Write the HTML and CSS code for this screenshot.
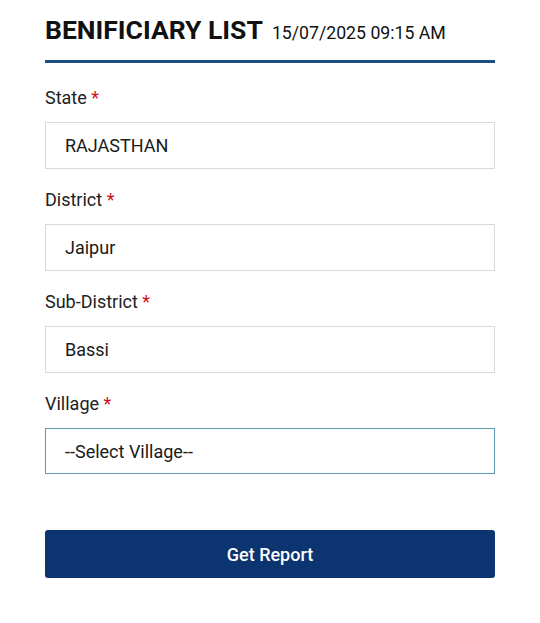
FILE: index.html
```html
<!DOCTYPE html>
<html>
<head>
<meta charset="utf-8">
<link rel="stylesheet" href="styles.css">
</head>
<body>
<div class="page">
  <div class="header">
    <h1 class="title">BENIFICIARY LIST</h1>
    <span class="date">15/07/2025 09:15 AM</span>
  </div>
  <form class="form">
    <div class="field">
      <label class="label">State <span class="req">*</span></label>
      <div class="input">RAJASTHAN</div>
    </div>
    <div class="field">
      <label class="label">District <span class="req">*</span></label>
      <div class="input">Jaipur</div>
    </div>
    <div class="field">
      <label class="label">Sub-District <span class="req">*</span></label>
      <div class="input">Bassi</div>
    </div>
    <div class="field">
      <label class="label">Village <span class="req">*</span></label>
      <div class="input focus">--Select Village--</div>
    </div>
    <button type="button" class="btn">Get Report</button>
  </form>
</div>
</body>
</html>
```
FILE: styles.css
```css
html, body {
  margin: 0;
  padding: 0;
  background: #fff;
}
body {
  font-family: Roboto, "Liberation Sans", sans-serif;
  color: #1a1a1a;
}
.page {
  padding: 15px 45px 0 45px;
}
.header {
  display: flex;
  align-items: baseline;
  gap: 9px;
  padding-bottom: 15px;
  border-bottom: 3px solid #1b4f80;
}
.title {
  margin: 0;
  font-size: 26.5px;
  font-weight: 700;
  line-height: 30px;
  color: #111;
}
.date {
  font-size: 17.7px;
  color: #111;
}
.form {
  display: flex;
  flex-direction: column;
  padding-top: 23px;
}
.field {
  display: flex;
  flex-direction: column;
  margin-bottom: 19px;
}
.label {
  font-size: 18px;
  line-height: 24px;
  margin-bottom: 12px;
  color: #222;
}
.req {
  color: #d0121b;
}
.input {
  height: 45px;
  border: 1px solid #d9d9d9;
  padding: 0 19px;
  display: flex;
  align-items: center;
  font-size: 18px;
  color: #1a1a1a;
}
.input.focus {
  border: 1.5px solid #5e9ab3;
  height: 44px;
}
.btn {
  margin-top: 37px;
  height: 48px;
  border: none;
  border-radius: 3px;
  background: #0b3470;
  color: #fff;
  font-family: Roboto, "Liberation Sans", sans-serif;
  font-size: 18px;
  font-weight: 500;
}
```
